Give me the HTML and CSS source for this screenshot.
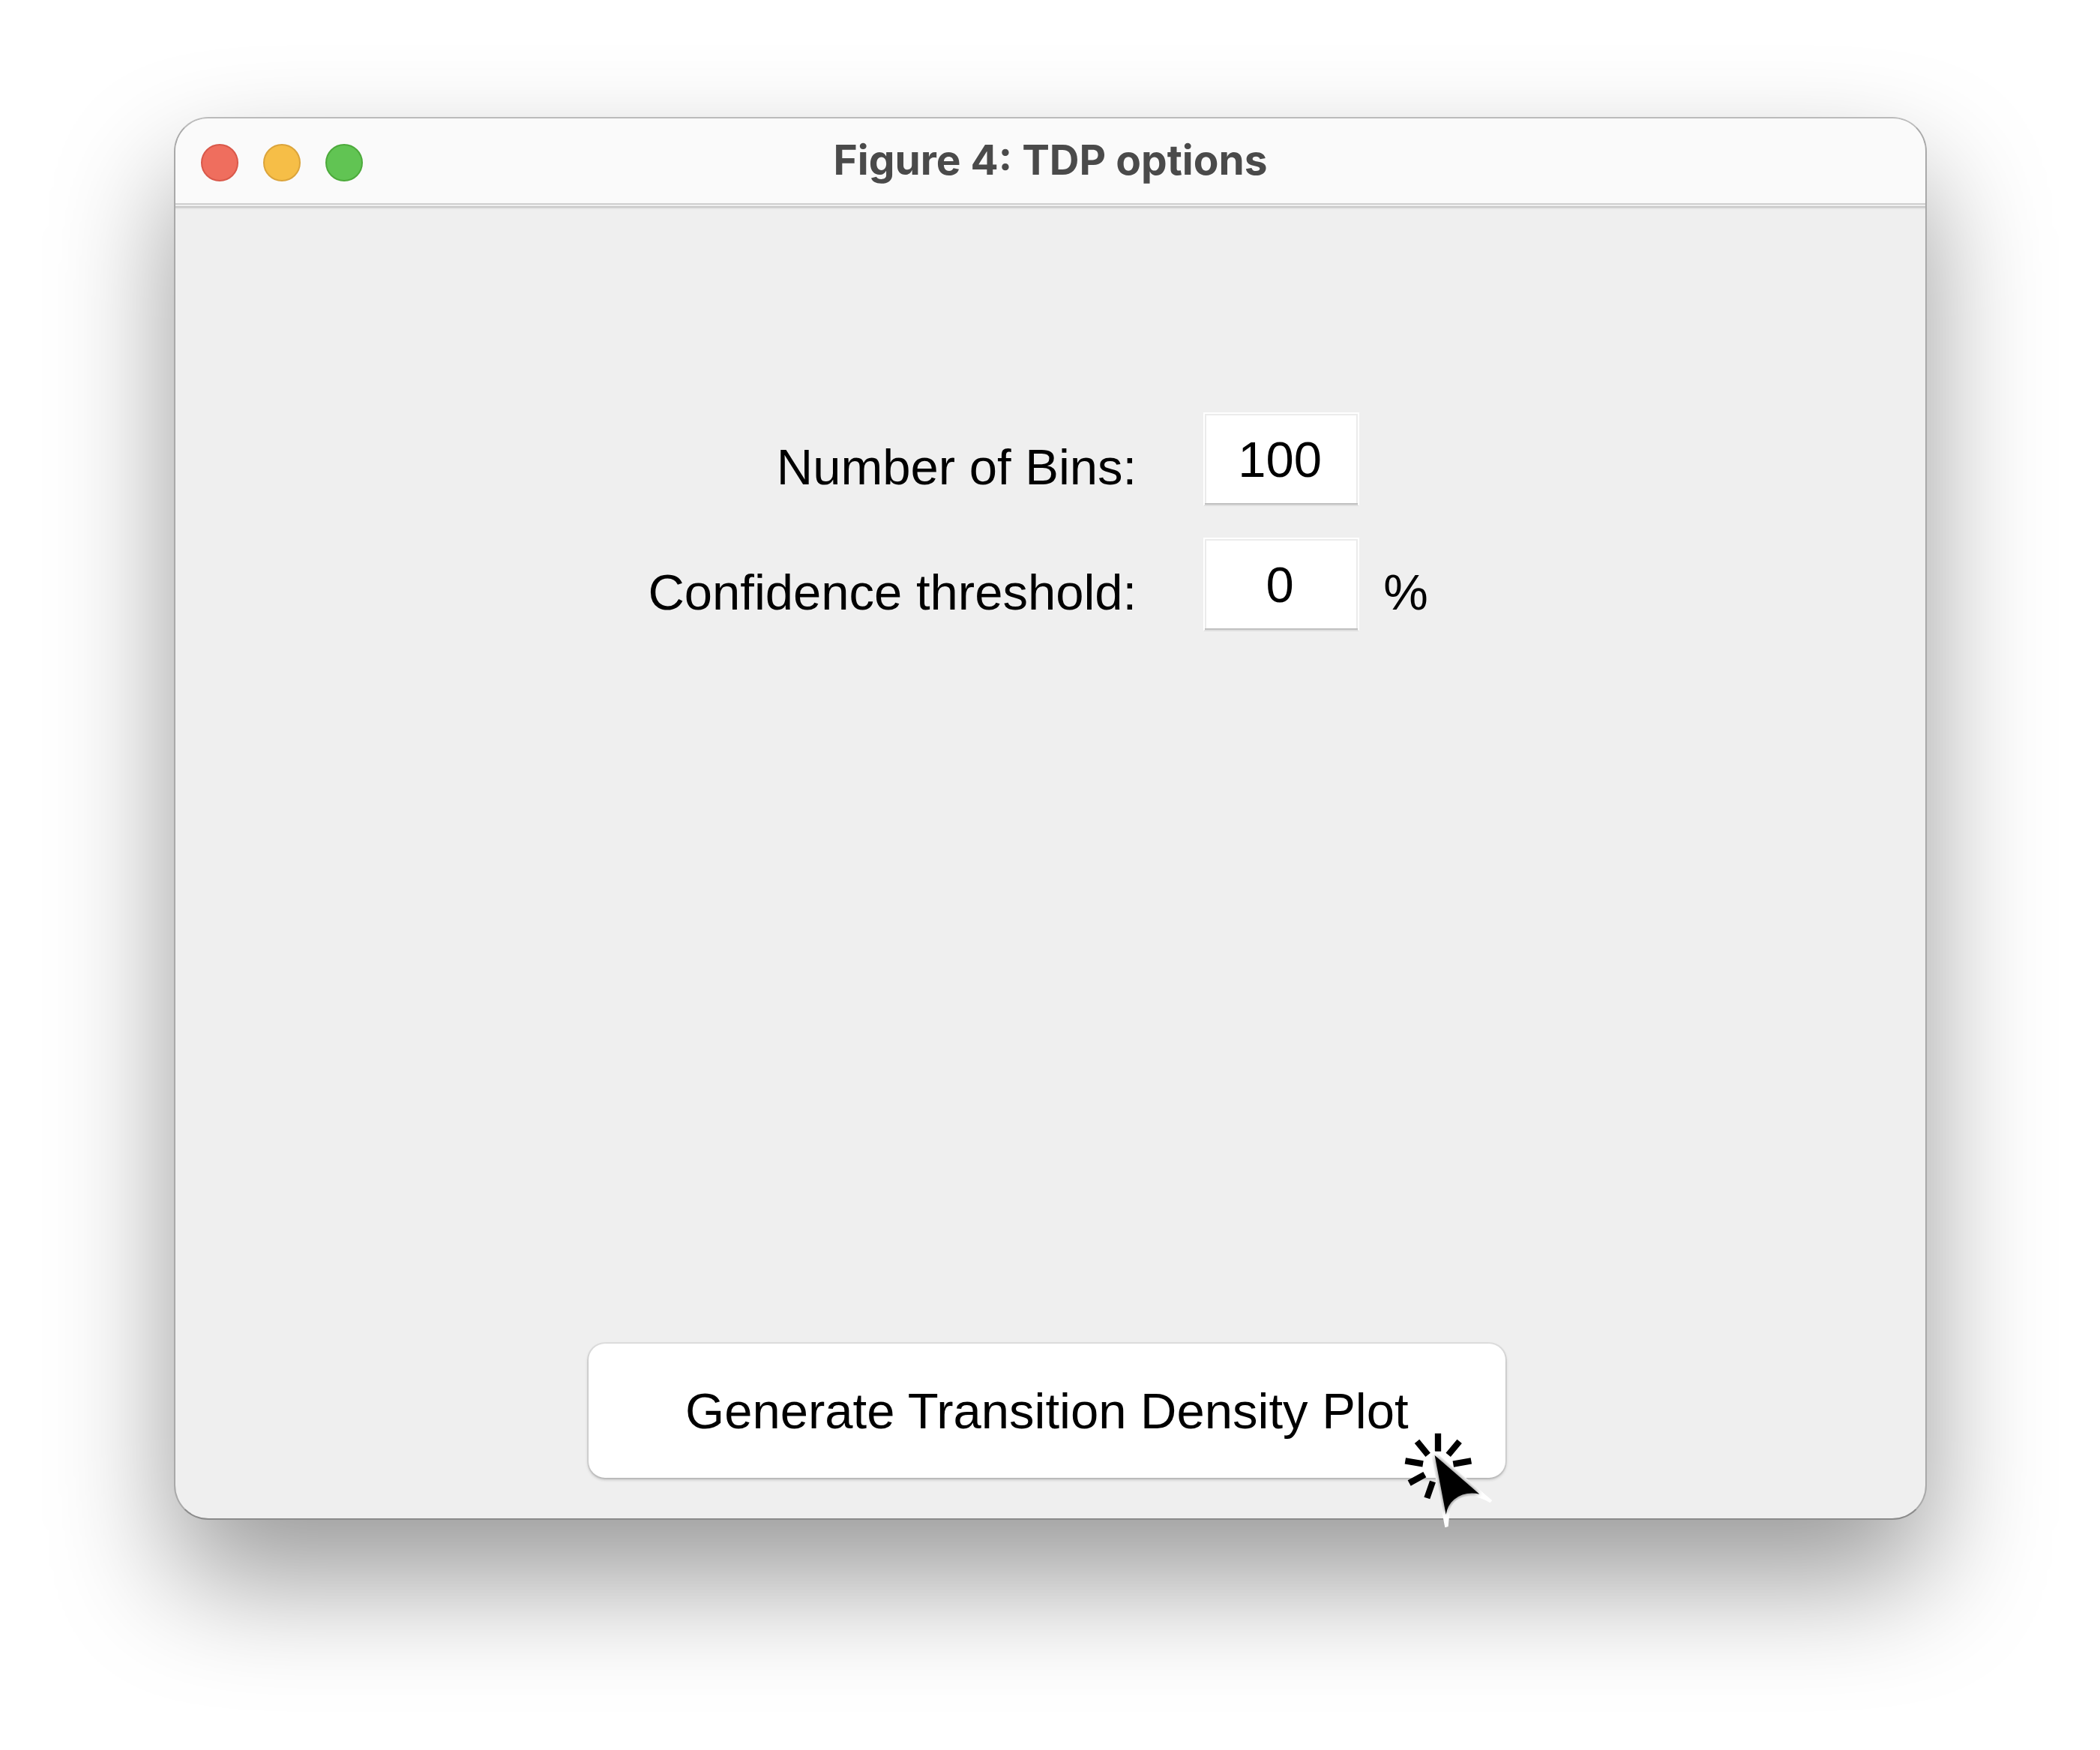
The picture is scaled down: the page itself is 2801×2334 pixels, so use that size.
FILE: index.html
```html
<!DOCTYPE html>
<html lang="en">
<head>
<meta charset="utf-8">
<title>Figure 4: TDP options</title>
<link rel="stylesheet" href="styles.css">
</head>
<body>
<main class="window">
  <header class="titlebar">
    <div class="lights">
      <button class="light light-close" type="button" aria-label="Close"></button>
      <button class="light light-minimize" type="button" aria-label="Minimize"></button>
      <button class="light light-zoom" type="button" aria-label="Zoom"></button>
    </div>
    <h1 class="title">Figure 4: TDP options</h1>
  </header>
  <form class="panel">
    <div class="fields">
      <label class="label" for="bins">Number of Bins:</label>
      <input class="input" id="bins" type="text" value="100">
      <span class="unit"></span>
      <label class="label" for="threshold">Confidence threshold:</label>
      <input class="input" id="threshold" type="text" value="0">
      <span class="unit">%</span>
    </div>
    <div class="actions">
      <button class="generate" type="button">Generate Transition Density Plot</button>
      <svg class="cursor" viewBox="0 0 540 480" aria-hidden="true">
        <defs>
          <clipPath id="halo"><path d="M204 138Q218 128 232 146L451 334L442 343Q395 313 350 318Q300 325 285 364Q279 390 275 438L262 442Z"/></clipPath>
          <filter id="soft" x="-20%" y="-20%" width="140%" height="140%"><feGaussianBlur stdDeviation="9"/></filter>
        </defs>
        <g stroke="#000" stroke-width="25">
          <path d="M234 65V137M150 97L194 151M320 97L275 151M103 175L174 187M367 175L295 188M119 264L181 230M190 324L213 258"/>
        </g>
        <g clip-path="url(#halo)">
          <path fill="#fff" d="M190 120H460V450H190Z"/>
          <path fill="#000" opacity=".6" filter="url(#soft)" d="M221 153L400 308Q330 298 290 340Q272 360 266 390Z"/>
        </g>
        <path d="M221 153L400 308Q340 296 298 330Q272 352 266 390Z"/>
      </svg>
    </div>
  </form>
</main>
</body>
</html>
```

FILE: styles.css
```css
* {
  box-sizing: border-box;
}

body {
  display: flex;
  min-height: 100vh;
  margin: 0;
  padding: 156px 231px 307px 232px;
  background: #fff;
  color: #000;
  font-family: "Liberation Sans", Arial, sans-serif;
  font-size: 67px;
}

.window {
  display: flex;
  flex: 1;
  flex-direction: column;
  border: 2px solid;
  border-color: #bbb #a9a9a9 #8b8b8b;
  border-radius: 46px;
  background: #efefef;
  box-shadow: 0 80px 160px rgba(0, 0, 0, 0.4);
}

.titlebar {
  display: grid;
  grid-template-columns: 1fr auto 1fr;
  align-items: start;
  height: 115px;
  border-bottom: 2px solid #cfcfcf;
  border-radius: 44px 44px 0 0;
  background: #fafafa;
}

.lights {
  display: flex;
  gap: 33px;
  padding: 34px;
}

.light {
  width: 50px;
  height: 50px;
  padding: 0;
  border: 2px solid;
  border-radius: 50%;
}

.light-close {
  border-color: #d9584a;
  background: #ef6e5e;
}

.light-minimize {
  border-color: #dba43b;
  background: #f6be47;
}

.light-zoom {
  border-color: #4caa3b;
  background: #61c453;
}

.title {
  margin: 0;
  color: #4a4a4a;
  font-family: Inter, sans-serif;
  font-size: 55px;
  font-weight: 700;
  line-height: 110px;
}

.panel {
  display: flex;
  flex: 1;
  flex-direction: column;
  justify-content: space-between;
  margin-top: 2px;
  border-top: 2px solid #c8c8c8;
  box-shadow: inset 0 2px #e2e2e2;
}

.fields {
  display: grid;
  grid-template-columns: 58.75% 208px 1fr;
  row-gap: 42px;
  align-items: center;
  padding-top: 273px;
}

.label,
.unit {
  padding-top: 20px;
}

.label {
  padding-right: 89px;
  text-align: right;
}

.unit {
  padding-left: 32px;
}

.input {
  width: 208px;
  height: 125px;
  padding: 0 4px 0 0;
  border: 2px solid #fff;
  border-bottom-color: #dfdfdf;
  background: #fff;
  box-shadow: inset 0 -2px #c0c0c0, inset 0 0 0 2px #ebebeb;
  color: inherit;
  font: inherit;
  text-align: center;
}

.actions {
  position: relative;
  margin: 0 24% 54px 23.6%;
}

.generate {
  width: 100%;
  height: 179px;
  border: 0;
  border-radius: 22px;
  background: #fff;
  box-shadow: 0 0 0 2px rgba(0, 0, 0, 0.06), 0 2px 4px rgba(0, 0, 0, 0.25);
  color: inherit;
  font: inherit;
}

.cursor {
  position: absolute;
  right: -12px;
  bottom: -79px;
  width: 180px;
  height: 160px;
}
```
